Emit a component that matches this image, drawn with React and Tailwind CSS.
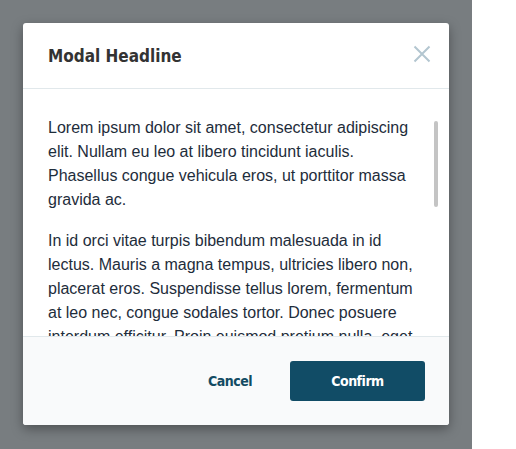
import React from 'react';

const paragraphs = [
  'Lorem ipsum dolor sit amet, consectetur adipiscing elit. Nullam eu leo at libero tincidunt iaculis. Phasellus congue vehicula eros, ut porttitor massa gravida ac.',
  'In id orci vitae turpis bibendum malesuada in id lectus. Mauris a magna tempus, ultricies libero non, placerat eros. Suspendisse tellus lorem, fermentum at leo nec, congue sodales tortor. Donec posuere interdum efficitur. Proin euismod pretium nulla, eget venenatis ex aliquet a.',
];

function CloseIcon() {
  return (
    <svg width="18" height="18" viewBox="0 0 18 18" fill="none">
      <path d="M1.5 1.5L16.5 16.5M16.5 1.5L1.5 16.5" stroke="#b3c6d0" strokeWidth="2" />
    </svg>
  );
}

export default function App() {
  return (
    <div className="flex h-[449px] w-[516px] bg-white">
      {/* Overlay */}
      <div className="h-full w-[472px] bg-[#787d80] pt-[23px] pl-[23px]">
        {/* Modal */}
        <div className="flex h-[402px] w-[426px] flex-col overflow-hidden rounded-[3px] bg-white shadow-[0_4px_12px_rgba(0,0,0,0.35)]">
          {/* Header */}
          <div className="flex h-[66px] shrink-0 items-center justify-between border-b border-[#e1e8eb] pl-[25px] pr-[15px] pt-[3px]">
            <h2 className="font-['DejaVu_Sans_Condensed',sans-serif] text-[17px] font-bold text-[#333]">
              Modal Headline
            </h2>
            <button className="mb-[7px] flex h-6 w-6 items-center justify-center">
              <CloseIcon />
            </button>
          </div>

          {/* Body */}
          <div className="relative min-h-0 flex-1 overflow-hidden border-b border-[#e1e8eb] pl-[25px] pr-[25px] pt-[27px]">
            {paragraphs.map((p, i) => (
              <p
                key={i}
                className="mb-[17px] font-['Liberation_Sans',Arial,sans-serif] text-[16px] leading-6 text-[#1e2d3b]"
              >
                {p}
              </p>
            ))}
            {/* scrollbar thumb */}
            <div className="absolute right-[11px] top-[32px] h-[86px] w-[4px] rounded-full bg-[#c4c4c4]" />
          </div>

          {/* Footer */}
          <div className="flex h-[88px] shrink-0 items-center justify-end gap-[38px] bg-[#f9fafb] pr-[24px]">
            <button className="font-['DejaVu_Sans_Condensed',sans-serif] text-[14px] font-bold tracking-[-0.5px] text-[#134b63]">
              Cancel
            </button>
            <button className="h-10 w-[135px] rounded-[3px] bg-[#114c66] font-['DejaVu_Sans_Condensed',sans-serif] text-[14px] font-bold tracking-[-0.5px] text-white">
              Confirm
            </button>
          </div>
        </div>
      </div>
    </div>
  );
}
